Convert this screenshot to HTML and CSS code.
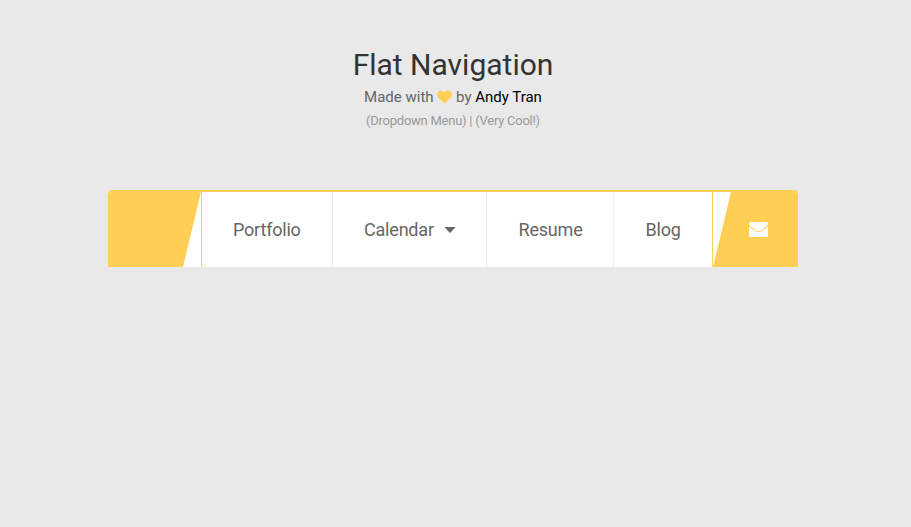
FILE: index.html
```html
<!DOCTYPE html>
<html lang="en">
<head>
<meta charset="utf-8">
<title>Flat Navigation</title>
<link rel="stylesheet" href="styles.css">
</head>
<body>
<header class="info">
  <h1>Flat Navigation</h1>
  <p class="credit"><span>Made with </span><svg class="heart" viewBox="0 0 15 14" aria-hidden="true"><path d="M7.5 13.5 1.4 7.6C-.3 5.8 0 2.7 1.7 1.4 3.5 0 5.9.5 7.5 2.4 9.100.5 11.500 0 13.300 1.4 15 2.700 15.300 5.800 13.600 7.600Z"/></svg><span> by <a href="#">Andy Tran</a></span></p>
  <p class="notes">(Dropdown Menu) | (Very Cool!)</p>
</header>
<nav class="nav">
  <a class="home" href="#" aria-label="Home"><span class="home-slant"></span></a>
  <a class="item first" href="#">Portfolio</a>
  <a class="item calendar" href="#">Calendar<svg class="caret" viewBox="0 0 12 6" aria-hidden="true"><path d="M.4 0H11.600L6.600 5.500Q6 6 5.400 5.500Z"/></svg></a>
  <a class="item resume" href="#">Resume</a>
  <a class="item blog" href="#">Blog</a>
  <a class="contact" href="#" aria-label="Contact"><span class="slant"><svg class="mail" viewBox="0 0 19 15" aria-hidden="true"><path d="M0 1.500Q0 0 1.500 0H17.500Q19 0 19 1.500 19 3.100 17.200 4.400L11.300 8.700Q9.500 9.900 7.700 8.700L1.800 4.400Q0 3.100 0 1.500ZM0 4.400 7.200 9.500Q9.500 11 11.800 9.500L19 4.400V13.500Q19 15 17.500 15H1.500Q0 15 0 13.500Z"/></svg></span></a>
</nav>
</body>
</html>
```
FILE: styles.css
```css
* { box-sizing: border-box; }
body {
  margin: 0;
  padding: 47px 5px 0 0;
  background: #e9e9e9;
  color: #666;
  font-family: Roboto, "Open Sans", sans-serif;
}
a { color: inherit; text-decoration: none; }
.info { height: 143px; text-align: center; }
h1 {
  margin: 0;
  color: #333;
  font-size: 30px;
  font-weight: 400;
  line-height: 36px;
}
.credit {
  margin: 4px 0 0;
  font-size: 15px;
  line-height: 20px;
  white-space: pre;
}
.credit a { color: #000; }
.heart { width: 15px; height: 14px; fill: #ffce55; vertical-align: -2px; }
.notes {
  margin: 6px 0 0;
  color: #999;
  font-size: 13px;
  line-height: 16px;
  letter-spacing: -.25px;
}
.nav {
  display: flex;
  width: 690px;
  height: 77px;
  margin: 0 auto;
  overflow: hidden;
  background: #fff;
  border-top: 2px solid #ffce55;
  border-radius: 4px 4px 0 0;
  font-size: 18px;
  letter-spacing: -.2px;
}
.home {
  display: flex;
  width: 94px;
  border-right: 1px solid #ffce55;
}
.home-slant {
  width: 100%;
  background: #ffce55;
  clip-path: polygon(0 0, 100% 0, 75px 100%, 0 100%);
}
.item {
  display: flex;
  align-items: center;
  width: 131px;
  padding-left: 31px;
  border-left: 1px solid #eee;
}
.item.first { width: 130px; border-left: 0; }
.calendar { width: 154px; }
.resume { width: 127px; padding-left: 31.500px; }
.blog { width: 99px; padding-left: 31.500px; }
.caret { width: 12px; height: 6px; margin-left: 10.500px; fill: #666; }
.contact {
  display: flex;
  width: 86px;
  border-left: 1px solid #ffce55;
}
.slant {
  display: flex;
  align-items: center;
  width: 100%;
  padding: 0 0 0 36px;
  background: #ffce55;
  clip-path: polygon(18px 0, 100% 0, 100% 100%, 0 100%);
}
.mail { width: 19px; height: 15px; fill: #fff; }
```
